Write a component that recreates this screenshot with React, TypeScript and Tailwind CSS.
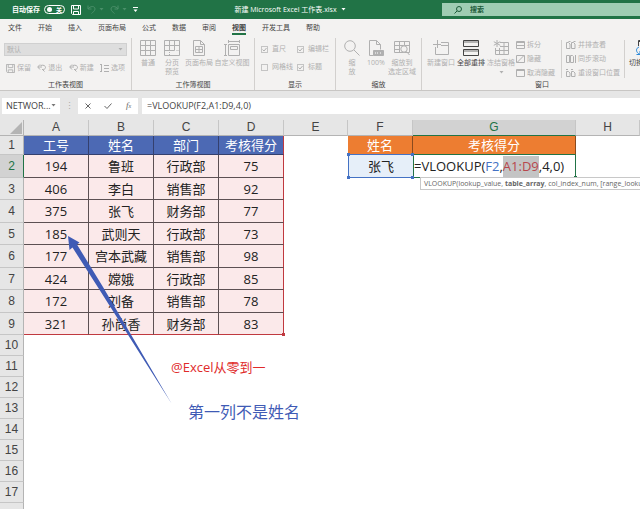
import type { ReactNode } from 'react';
import clsx from 'clsx';

type Row = {
  id: number;
  name: string;
  dept: string;
  score: number;
};

const ROWS: Row[] = [
  { id: 194, name: '鲁班', dept: '行政部', score: 75 },
  { id: 406, name: '李白', dept: '销售部', score: 92 },
  { id: 375, name: '张飞', dept: '财务部', score: 77 },
  { id: 185, name: '武则天', dept: '行政部', score: 73 },
  { id: 177, name: '宫本武藏', dept: '销售部', score: 98 },
  { id: 424, name: '嫦娥', dept: '行政部', score: 85 },
  { id: 172, name: '刘备', dept: '销售部', score: 78 },
  { id: 321, name: '孙尚香', dept: '财务部', score: 83 },
];

const COLUMNS = ['A', 'B', 'C', 'D', 'E', 'F', 'G', 'H'];
const HEADERS = ['工号', '姓名', '部门', '考核得分'];
const EMPTY_ROWS = [10, 11, 12, 13, 14, 15, 16, 17];

const TABS = ['文件', '开始', '插入', '页面布局', '公式', '数据', '审阅', '视图', '开发工具', '帮助'];

const Svg = ({ children, className, box = '0 0 16 16' }: { children: ReactNode; className?: string; box?: string }) => (
  <svg viewBox={box} className={clsx('shrink-0', className)} fill="none" stroke="currentColor" strokeWidth="1" aria-hidden="true">
    {children}
  </svg>
);

const SaveIcon = ({ className }: { className?: string }) => (
  <Svg className={className} box="0 0 10 10">
    <path d="M.5.5h9v9h-8l-1-1zM2.5.5v3.5h5V.5M2.5 9.5V6.5h5v3" />
  </Svg>
);

const Caret = ({ className }: { className?: string }) => (
  <Svg className={clsx('h-[3px] w-[5px]', className)} box="0 0 5 3">
    <path d="M.5 0h4l-2 2.5z" fill="currentColor" stroke="none" />
  </Svg>
);

const NormalIcon = () => (
  <Svg className="size-4">
    <path d="M.5.5h15v15H.5zM.5 5.5h15M.5 10.5h15M5.5.5v15M10.5.5v15" />
  </Svg>
);

const PageBreakIcon = () => (
  <Svg className="size-4">
    <path d="M.5.5h15v15H.5zM.5 5.5h15M5.5.5v10M10.5.5v10M.5 10.5h10" />
    <path d="M12.5 10.5h3M5.5 12v3.5" strokeDasharray="1 1" />
  </Svg>
);

const PageLayoutIcon = () => (
  <Svg className="size-4">
    <path d="M2.5.5h7l4 4v11h-11zM9.5.5v4h4" />
    <path d="M4.5 6.5h7v6h-7zM4.5 9.5h7M8 6.5v6" />
  </Svg>
);

const CustomViewIcon = () => (
  <Svg className="size-4">
    <path d="M4.5 4.5h11v11h-11zM6.5 6.5h7v3h-7zM4.5 1.5h11M4.5 0v3M15.5 0v3M1.5 4.5v11M0 4.5h3M0 15.5h3" />
  </Svg>
);

const ZoomIcon = () => (
  <Svg className="size-4">
    <circle cx="6" cy="6" r="5.3" />
    <path d="m10 10 5.5 5.5" />
  </Svg>
);

const HundredIcon = () => (
  <Svg className="size-4">
    <path d="M5.5 15.5h-4V.5h7l4 4v5M8.5.5v4h4" />
    <path d="M5.5 10.5h10v5h-10z" fill="#b0b0b0" />
    <path d="M7.5 12v2M9.5 12v2M12.5 12v2" stroke="#d8d8d8" />
  </Svg>
);

const ZoomSelectionIcon = () => (
  <Svg className="size-4">
    <path d="M.5 1.5h15v11H.5zM.5 5.5h15M.5 9.5h5M5.5 1.5v11M10.5 1.5v4" />
    <circle cx="10" cy="9" r="3.2" fill="#f3f2f1" />
    <path d="m12.5 11.5 3 3.5" />
  </Svg>
);

const NewWindowIcon = () => (
  <Svg className="size-4">
    <path d="M8 2.5h7.5v12h-13V7M8 5.5h7.5M4.5 0v8M0 4.5h8" />
  </Svg>
);

const ArrangeIcon = () => (
  <Svg className="size-4">
    <path d="M.5.5h15v6H.5zM.5 9.5h15v6H.5z" />
    <path d="M1 2h14M1 11h14" stroke="#777" />
  </Svg>
);

const FreezeIcon = () => (
  <Svg className="size-4">
    <path d="M7 2.5h8.5v12h-13V8M2.5 10.5h13M7 6.5h8.5M6.5 8v6.5M11 2.5v12" />
    <path d="M4 0v7M.8 1.7l6.4 3.6M7.2 1.7.8 5.3" />
  </Svg>
);

const SplitIcon = () => (
  <Svg className="h-2 w-[9px]" box="0 0 9 8">
    <path d="M.5.5h8v7h-8zM.5 1.5h8M.5 4.5h8" />
  </Svg>
);

const HideIcon = () => (
  <Svg className="h-2 w-[9px]" box="0 0 9 8">
    <path d="M.5.5h8v7h-8zM1 7.5l7-7" />
  </Svg>
);

const UnhideIcon = () => (
  <Svg className="h-2 w-[9px]" box="0 0 9 8">
    <path d="M.5.5h8v7h-8zM.5 1.5h8" />
  </Svg>
);

const SideBySideIcon = () => (
  <Svg className="h-2 w-[10px]" box="0 0 10 8">
    <path d="M.5 1.5h2L4 3v4.5H.5zM5.5 1.5h2L9 3v4.5H5.5zM2.5.5h2M7.5.5h2" />
  </Svg>
);

const SyncIcon = () => (
  <Svg className="h-2 w-[10px]" box="0 0 10 8">
    <path d="M.5.5h3v7h-3zM4.5.5h2l1 1v6h-3zM9.5 0v8" />
  </Svg>
);

const ResetIcon = () => (
  <Svg className="h-2 w-[10px]" box="0 0 10 8">
    <path d="M.5 2.5h2L4 4v3.500H.5zM5.5 2.5h2L9 4v3.500H5.5zM0 .5h2M5 .5h2" />
  </Svg>
);

const ExitIcon = () => (
  <Svg className="h-2 w-[9px]" box="0 0 9 8">
    <path d="M3 .5.7 3 3 5.5M1 3h4M3.5 1.5c3.500-1 5 .5 5 2s-1.500 2-3 2M5 5l2.500 2.500" />
  </Svg>
);

const OptionsIcon = () => (
  <Svg className="h-2 w-[9px]" box="0 0 9 8">
    <path d="M1.5.5v7M0 .5h2M0 7.5h2M4 1.5h5M4 4.500h5M4 7.500h5" />
  </Svg>
);

const SwitchIcon = () => (
  <Svg className="size-4">
    <path d="M3.5 6V.5h12v10M3.5 1.5h12M6.5 4.5h9M10.5 4.5v8h5" />
    <path d="M4 7c-3 1-4 5 1 7.500M5 11v3.500H1.500" stroke="#2b88d8" />
  </Svg>
);

const BigButton = ({ icon, lines, className, active }: { icon: ReactNode; lines: string[]; className?: string; active?: boolean }) => (
  <button
    type="button"
    className={clsx('flex shrink-0 flex-col items-center gap-[2px] whitespace-nowrap', active ? 'text-[#444]' : 'text-[#b0b0b0]', className)}
  >
    {icon}
    <span className="leading-[9px]">
      {lines.map((line) => (
        <span key={line} className="block">{line}</span>
      ))}
    </span>
  </button>
);

const SmallButton = ({ icon, label }: { icon: ReactNode; label: string }) => (
  <button type="button" className="flex items-center gap-[2px] whitespace-nowrap text-[#b0b0b0]">
    {icon}
    {label}
  </button>
);

const Check = ({ label, checked }: { label: string; checked?: boolean }) => (
  <label className="relative flex items-center gap-1 whitespace-nowrap text-[#b0b0b0]">
    <input type="checkbox" defaultChecked={checked} className="size-[7px] appearance-none border border-[#c4c4c4]" />
    {checked && (
      <Svg className="absolute left-0 size-[7px]" box="0 0 7 7">
        <path d="m1.5 3.5 1.5 1.5 2.5-3" />
      </Svg>
    )}
    {label}
  </label>
);

const Group = ({ label, className, children }: { label: string; className?: string; children: ReactNode }) => (
  <section className={clsx('flex flex-col justify-between border-r border-[#d2d0ce]', className)}>
    <div className="flex">{children}</div>
    <h2 className="text-center leading-[10px] text-[#444]">{label}</h2>
  </section>
);

const TitleBar = () => (
  <header className="flex h-[19px] items-center bg-[#217346] text-white">
    <label className="flex items-center gap-1 pl-3 font-semibold">
      自动保存
      <span className="flex h-[9px] w-[21px] items-center justify-between rounded-full border border-white px-[2px] text-[6px]">
        <input type="checkbox" role="switch" className="size-[5px] appearance-none rounded-full bg-white" />
        关
      </span>
    </label>
    <div className="flex items-center gap-[6px] pl-[6px]">
      <button type="button" aria-label="保存">
        <SaveIcon className="size-[10px]" />
      </button>
      <button type="button" aria-label="撤消" className="flex items-center gap-[3px] text-[#4a8f69]">
        <Svg className="size-[9px]" box="0 0 9 9">
          <path d="M1 .5V4h3.5M1 4C3 1 8 .5 8 4c0 2-2 3-3.5 4.5" />
        </Svg>
        <Caret />
      </button>
      <button type="button" aria-label="恢复" className="flex items-center gap-[3px] text-[#4a8f69]">
        <Svg className="size-[9px]" box="0 0 9 9">
          <path d="M8 .5V4H4.5M8 4C6 1 1 .5 1 4c0 2 2 3 3.5 4.5" />
        </Svg>
        <Caret />
      </button>
      <button type="button" aria-label="自定义快速访问工具栏">
        <Svg className="size-[5px]" box="0 0 5 5">
          <path d="M0 .5h5" />
          <path d="M.5 2.5h4L2.5 5z" fill="currentColor" stroke="none" />
        </Svg>
      </button>
    </div>
    <h1 className="flex flex-1 items-center justify-center gap-1 whitespace-nowrap">
      新建 Microsoft Excel 工作表.xlsx
      <Caret />
    </h1>
    <label className="flex h-[13px] w-[198px] items-center gap-2 bg-[#9fcdb3] pl-3 text-[#1d5c3a]">
      <Svg className="size-2" box="0 0 8 8">
        <circle cx="5" cy="3" r="2.5" />
        <path d="M3 5 .5 7.5" />
      </Svg>
      <input aria-label="搜索" placeholder="搜索" className="w-full font-semibold outline-none placeholder:text-[#1d5c3a]" />
    </label>
  </header>
);

const Ribbon = () => (
  <div className="bg-[#f3f2f1] text-[#444]">
    <nav className="flex h-4 items-center gap-4 pl-2">
      {TABS.map((tab) => (
        <button
          key={tab}
          type="button"
          className={clsx('h-4 border-b-2 pt-[3px] whitespace-nowrap', tab === '视图' ? 'border-[#217346] font-bold' : 'border-transparent')}
        >
          {tab}
        </button>
      ))}
    </nav>
    <div className="flex h-14 overflow-hidden border-b border-[#c8c6c4] pt-[3px]">
      <Group label="工作表视图" className="w-[132px] shrink-0">
        <div className="flex w-full flex-col gap-[7px] px-1 pt-[5px]">
          <div className="relative flex items-center">
            <select aria-label="工作表视图" className="h-[13px] w-full appearance-none border border-[#d0d0d0] bg-[#dedede] pl-[2px] text-[#b0b0b0]">
              <option>默认</option>
            </select>
            <Caret className="absolute right-1 text-[#b0b0b0]" />
          </div>
          <div className="flex justify-between px-[2px]">
            <SmallButton icon={<SaveIcon className="size-[9px]" />} label="保留" />
            <SmallButton icon={<ExitIcon />} label="退出" />
            <SmallButton icon={<ExitIcon />} label="新建" />
            <SmallButton icon={<OptionsIcon />} label="选项" />
          </div>
        </div>
      </Group>
      <Group label="工作簿视图" className="w-[123px] shrink-0">
        <div className="flex pt-[2px] pl-1">
          <BigButton className="w-6" icon={<NormalIcon />} lines={['普通']} />
          <BigButton className="w-6" icon={<PageBreakIcon />} lines={['分页', '预览']} />
          <BigButton className="w-[30px]" icon={<PageLayoutIcon />} lines={['页面布局']} />
          <BigButton className="w-9" icon={<CustomViewIcon />} lines={['自定义视图']} />
        </div>
      </Group>
      <Group label="显示" className="w-[81px] shrink-0">
        <div className="grid grid-cols-[36px_auto] gap-y-2 pt-[6px] pl-[6px]">
          <Check label="直尺" checked />
          <Check label="编辑栏" checked />
          <Check label="网格线" />
          <Check label="标题" checked />
        </div>
      </Group>
      <Group label="缩放" className="w-[86px] shrink-0">
        <div className="flex pt-[2px] pl-1">
          <BigButton className="w-6" icon={<ZoomIcon />} lines={['缩', '放']} />
          <BigButton className="w-6" icon={<HundredIcon />} lines={['100%']} />
          <BigButton className="w-7" icon={<ZoomSelectionIcon />} lines={['缩放到', '选定区域']} />
        </div>
      </Group>
      <Group label="窗口" className="w-[240px] shrink-0 border-r-0">
        <div className="flex pt-[2px] pl-1">
          <BigButton className="w-[30px]" icon={<NewWindowIcon />} lines={['新建窗口']} />
          <BigButton className="w-[30px]" icon={<ArrangeIcon />} lines={['全部重排']} active />
          <div className="flex w-[30px] flex-col items-center gap-1 text-[#b0b0b0]">
            <BigButton icon={<FreezeIcon />} lines={['冻结窗格']} />
            <Caret />
          </div>
          <div className="flex w-[46px] flex-col gap-1 border-r border-[#d2d0ce]">
            <SmallButton icon={<SplitIcon />} label="拆分" />
            <SmallButton icon={<HideIcon />} label="隐藏" />
            <SmallButton icon={<UnhideIcon />} label="取消隐藏" />
          </div>
          <div className="flex w-[63px] flex-col gap-1 border-r border-[#d2d0ce] pl-1">
            <SmallButton icon={<SideBySideIcon />} label="并排查看" />
            <SmallButton icon={<SyncIcon />} label="同步滚动" />
            <SmallButton icon={<ResetIcon />} label="重设窗口位置" />
          </div>
          <BigButton className="w-9" icon={<SwitchIcon />} lines={['切换窗口']} active />
        </div>
      </Group>
    </div>
  </div>
);

const FormulaBar = () => (
  <div className="flex h-[29px] items-center bg-[#e6e6e6] pl-[2px] text-[9px] text-[#444]">
    <div className="flex h-4 w-[58px] items-center bg-white px-1">
      <input aria-label="名称框" defaultValue="NETWOR..." className="w-full min-w-0 outline-none" />
      <Caret className="text-[#777]" />
    </div>
    <span className="w-[18px] text-center text-[#aaa]">⋮</span>
    <div className="flex h-4 w-[60px] items-center justify-around bg-white text-[#666]">
      <button type="button" aria-label="取消">
        <Svg className="size-[6px]" box="0 0 6 6"><path d="m.5.5 5 5M5.5.5l-5 5" /></Svg>
      </button>
      <button type="button" aria-label="输入">
        <Svg className="h-[6px] w-2" box="0 0 8 6"><path d="M.5 3 3 5.500l4.500-5" /></Svg>
      </button>
      <button type="button" aria-label="插入函数" className="font-['Liberation_Serif',serif] italic">
        f<span className="text-[6px]">x</span>
      </button>
    </div>
    <input
      aria-label="编辑栏"
      defaultValue="=VLOOKUP(F2,A1:D9,4,0)"
      className="ml-1 h-4 min-w-0 flex-1 bg-white pl-[5px] outline-none"
    />
  </div>
);

const Handle = ({ className }: { className: string }) => <span className={clsx('absolute z-10 size-[3px]', className)} />;

const RowNumber = ({ n, active }: { n?: number; active?: boolean }) => (
  <th
    scope="row"
    className={clsx(
      "border-r border-b border-b-[#c6c6c6] p-0 text-center font-['Liberation_Sans',sans-serif] text-[12px] font-normal",
      active ? 'border-r-[#217346] bg-[#d2d2d2] text-[#217346]' : 'border-r-[#b4b4b4] bg-[#e6e6e6] text-[#444]'
    )}
  >
    {n}
  </th>
);

const Sheet = () => (
  <main className="relative flex-1 overflow-hidden bg-white text-[13px] leading-[16px] text-[#222]">
    <table className="w-full table-fixed border-separate border-spacing-0 text-center">
      <colgroup>
        <col className="w-6" />
        <col className="w-[65px]" />
        <col className="w-[65px]" />
        <col className="w-[65px]" />
        <col className="w-[65px]" />
        <col className="w-[64px]" />
        <col className="w-[65px]" />
        <col className="w-[163px]" />
        <col />
      </colgroup>
      <thead>
        <tr className="h-4 bg-[#e6e6e6] text-[#444]">
          <td className="border-r border-b border-[#b4b4b4] p-0">
            <Svg className="mr-[1px] ml-auto size-3" box="0 0 12 12">
              <path d="M12 0v12H0z" fill="#b4b4b4" stroke="none" />
            </Svg>
          </td>
          {COLUMNS.map((column) => (
            <th
              key={column}
              scope="col"
              className={clsx(
                "border-r border-b p-0 font-['Liberation_Sans',sans-serif] text-[12px] leading-[15px] font-normal",
                column === 'G' ? 'border-r-[#c6c6c6] border-b-[#217346] bg-[#d2d2d2] text-[#217346]' : 'border-r-[#c6c6c6] border-b-[#b4b4b4]'
              )}
            >
              {column}
            </th>
          ))}
        </tr>
      </thead>
      <tbody>
        <tr className="h-[19px] text-white">
          <RowNumber n={1} />
          {HEADERS.map((header, i) => (
            <td
              key={header}
              className={clsx('border-r border-b border-b-[#34406e] bg-[#4c69b4] p-0', i === 3 ? 'border-r-[#c0393f]' : 'border-r-[#34406e]')}
            >
              {header}
            </td>
          ))}
          <td />
          <td className="border-r border-b border-r-[#8a4a1e] border-b-[#4472c4] bg-[#ed7d31] p-0">姓名</td>
          <td className="border-r border-b border-r-[#8a4a1e] border-b-[#217346] bg-[#ed7d31] p-0">考核得分</td>
          <td />
        </tr>
        {ROWS.map((row, i) => (
          <tr key={row.id} className="odd:h-[22px] even:h-[23px]">
            <RowNumber n={i + 2} active={i === 0} />
            {[row.id, row.name, row.dept, row.score].map((value, c) => (
              <td
                key={c}
                className={clsx(
                  'relative border-r border-b bg-[#fbe9ea] p-0',
                  c === 3 ? 'border-r-[#c0393f]' : 'border-r-[#5c5053]',
                  i === ROWS.length - 1 ? 'border-b-[#c0393f]' : 'border-b-[#5c5053]'
                )}
              >
                {value}
                {c === 3 && i === ROWS.length - 1 && <Handle className="-right-[2px] -bottom-[2px] bg-[#c0393f]" />}
              </td>
            ))}
            <td />
            {i === 0 ? (
              <>
                <td className="relative border-b border-l border-[#4472c4] bg-[#e6eff9] p-0">
                  张飞
                  <Handle className="-top-[2px] -left-[2px] bg-[#4472c4]" />
                  <Handle className="-top-[2px] -right-[1px] bg-[#4472c4]" />
                  <Handle className="-bottom-[2px] -left-[2px] bg-[#4472c4]" />
                  <Handle className="-right-[1px] -bottom-[2px] bg-[#4472c4]" />
                </td>
                <td className="relative border border-t-0 border-[#217346] p-0 text-left leading-[21px] whitespace-nowrap">
                  =VLOOKUP(<span className="text-[#4472c4]">F2</span>,
                  <span className="inline-block bg-[#c4c4c4] text-[#b8474c]">A1:D9</span>,4,0)
                  <Handle className="-right-[2px] -bottom-[2px] bg-[#217346]" />
                  <div role="tooltip" className="absolute top-[22px] left-[6px] z-20 border border-[#c8c8c8] bg-white px-[3px] text-[7px] leading-[11px] text-[#666]">
                    VLOOKUP(lookup_value, <b>table_array</b>, col_index_num, [range_lookup])
                  </div>
                </td>
              </>
            ) : (
              <>
                <td />
                <td />
              </>
            )}
            <td />
          </tr>
        ))}
        {EMPTY_ROWS.map((n) => (
          <tr key={n} className="h-[21px]">
            <RowNumber n={n} />
            <td colSpan={8} />
          </tr>
        ))}
        <tr className="h-[21px]">
          <RowNumber />
          <td colSpan={8} />
        </tr>
      </tbody>
    </table>
    <svg viewBox="0 0 104 168" className="absolute top-[116px] left-[68px] h-[168px] w-[104px]" aria-hidden="true">
      <path d="M0 0 11.5 6.5 9 8.5 35 51 103.5 167.5 31 53 4.5 11.5 1.5 14z" fill="#3f5bb5" />
    </svg>
    <p className="absolute top-[239px] left-[171px] text-[#e02a2a]">@Excel从零到一</p>
    <p className="absolute top-[281px] left-[188px] text-[16px] leading-[22px] text-[#3f5bb5]">第一列不是姓名</p>
  </main>
);

const App = () => (
  <div className="flex h-screen flex-col overflow-hidden font-['Open_Sans','Noto_Sans_CJK_SC',sans-serif] text-[7px] leading-[10px]">
    <TitleBar />
    <Ribbon />
    <FormulaBar />
    <Sheet />
  </div>
);

export default App;
